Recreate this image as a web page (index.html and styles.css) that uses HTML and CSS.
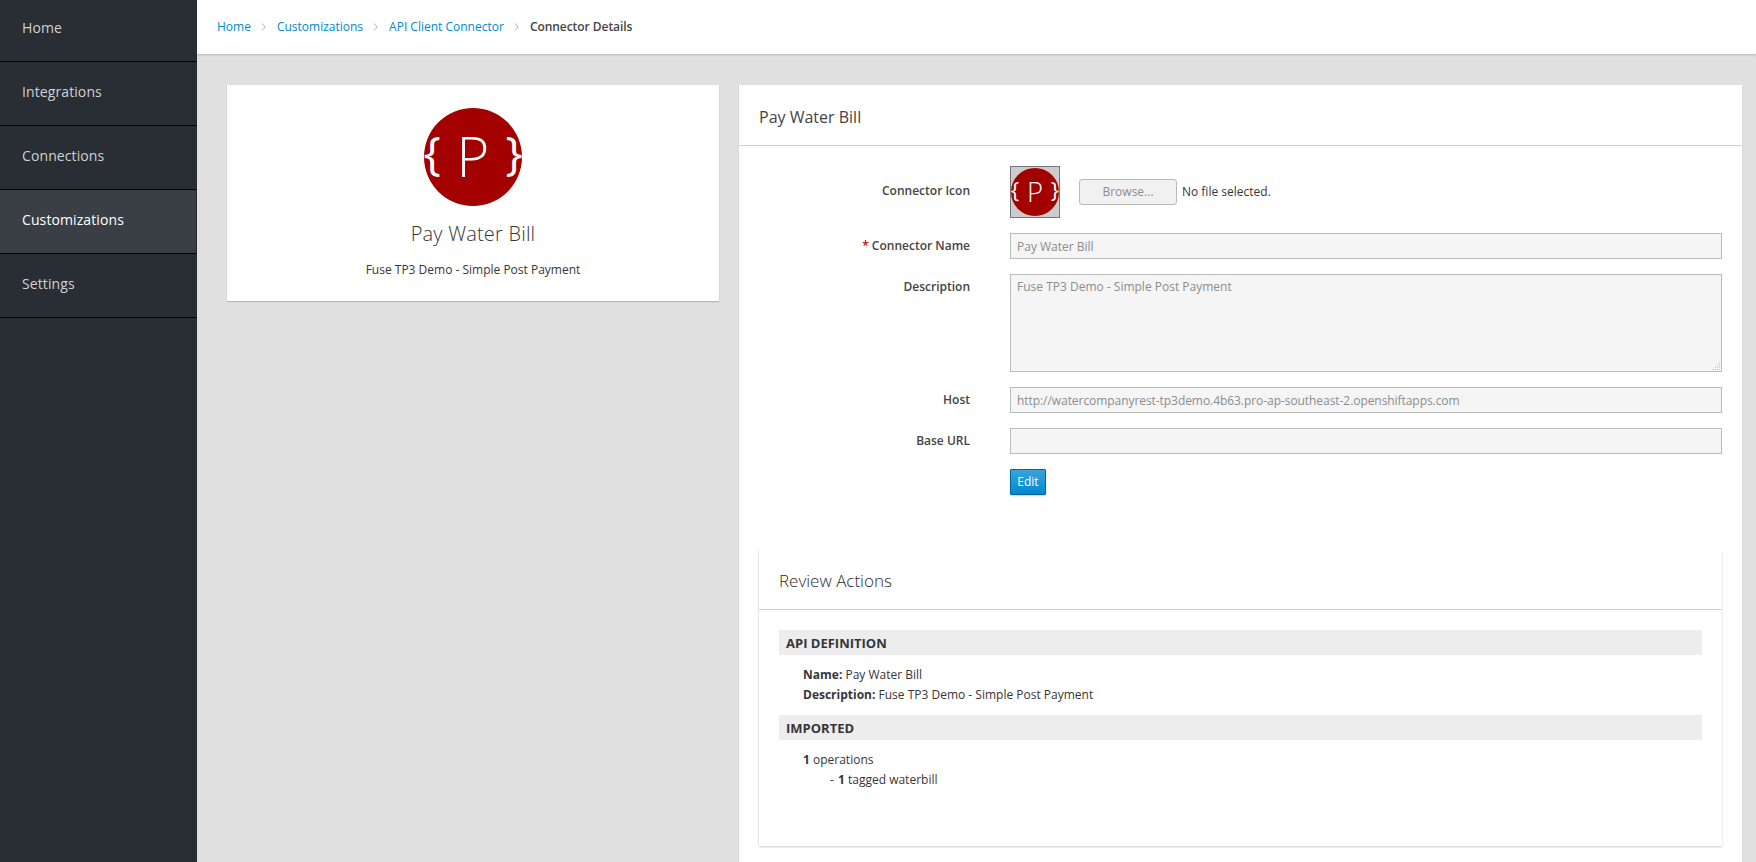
FILE: index.html
```html
<!DOCTYPE html>
<html lang="en">
<head>
    <meta charset="UTF-8">
    <title>Connector Details</title>
    <link rel="stylesheet" href="styles.css">
</head>
<body>
    <nav class="sidebar">
        <a class="nav-item nav-first">Home</a>
        <a class="nav-item">Integrations</a>
        <a class="nav-item">Connections</a>
        <a class="nav-item active">Customizations</a>
        <a class="nav-item">Settings</a>
    </nav>

    <div class="main">
        <div class="topbar">
            <a class="crumb">Home</a>
            <svg class="crumb-sep" viewBox="0 0 5 8"><polyline points="1,0.5 4,4 1,7.5"/></svg>
            <a class="crumb">Customizations</a>
            <svg class="crumb-sep" viewBox="0 0 5 8"><polyline points="1,0.5 4,4 1,7.5"/></svg>
            <a class="crumb">API Client Connector</a>
            <svg class="crumb-sep" viewBox="0 0 5 8"><polyline points="1,0.5 4,4 1,7.5"/></svg>
            <span class="crumb-current">Connector Details</span>
        </div>

        <div class="content">
            <div class="card summary-card">
                <svg class="logo logo-large" viewBox="0 0 98 98">
                    <circle cx="49" cy="49" r="49"/>
                    <text class="brace" x="8" y="62" text-anchor="middle">{</text>
                    <text x="49" y="69" text-anchor="middle">P</text>
                    <text class="brace" x="90" y="62" text-anchor="middle">}</text>
                </svg>
                <h2 class="summary-name">Pay Water Bill</h2>
                <p class="summary-desc">Fuse TP3 Demo - Simple Post Payment</p>
            </div>

            <div class="card detail-card">
                <div class="card-title">Pay Water Bill</div>
                <form class="detail-form">
                    <label class="form-label label-icon">Connector Icon</label>
                    <div class="icon-row">
                        <div class="icon-box">
                            <svg class="logo logo-small" viewBox="0 0 98 98">
                                <circle cx="49" cy="49" r="49"/>
                                <text class="brace" x="8" y="62" text-anchor="middle">{</text>
                                <text x="49" y="69" text-anchor="middle">P</text>
                                <text class="brace" x="90" y="62" text-anchor="middle">}</text>
                            </svg>
                        </div>
                        <button type="button" class="btn-browse" disabled>Browse...</button>
                        <span class="file-name">No file selected.</span>
                    </div>

                    <label class="form-label"><span class="required">*</span> Connector Name</label>
                    <input class="field" type="text" value="Pay Water Bill" disabled>

                    <label class="form-label">Description</label>
                    <div class="area-wrap">
                        <textarea class="field field-area" disabled>Fuse TP3 Demo - Simple Post Payment</textarea>
                        <svg class="grip" viewBox="0 0 9 9">
                            <rect x="7" y="1" width="1" height="1"/>
                            <rect x="5" y="3" width="1" height="1"/>
                            <rect x="7" y="3" width="1" height="1"/>
                            <rect x="3" y="5" width="1" height="1"/>
                            <rect x="5" y="5" width="1" height="1"/>
                            <rect x="7" y="5" width="1" height="1"/>
                            <rect x="1" y="7" width="1" height="1"/>
                            <rect x="3" y="7" width="1" height="1"/>
                            <rect x="5" y="7" width="1" height="1"/>
                            <rect x="7" y="7" width="1" height="1"/>
                        </svg>
                    </div>

                    <label class="form-label">Host</label>
                    <input class="field field-host" type="text" value="http://watercompanyrest-tp3demo.4b63.pro-ap-southeast-2.openshiftapps.com" disabled>

                    <label class="form-label">Base URL</label>
                    <input class="field" type="text" disabled>

                    <div class="form-actions">
                        <button type="button" class="btn-edit">Edit</button>
                    </div>
                </form>

                <div class="review">
                    <div class="review-title">Review Actions</div>
                    <div class="review-body">
                        <div class="review-bar">API DEFINITION</div>
                        <div class="review-rows">
                            <div><b>Name:</b> Pay Water Bill</div>
                            <div><b>Description:</b> Fuse TP3 Demo - Simple Post Payment</div>
                        </div>
                        <div class="review-bar">IMPORTED</div>
                        <div class="review-rows">
                            <div><b>1</b> operations</div>
                            <div class="review-tag">- <b>1</b> tagged waterbill</div>
                        </div>
                    </div>
                </div>
            </div>
        </div>
    </div>
</body>
</html>
```

FILE: styles.css
```css
html, body {
    height: 100%;
}
body {
    margin: 0;
    display: flex;
    overflow: hidden;
    font-family: "Open Sans", sans-serif;
    font-size: 12px;
    line-height: 20px;
    color: #363636;
    background-color: #e0e0e0;
}

/* sidebar */
.sidebar {
    width: 197px;
    flex: none;
    background-color: #292e34;
}
.nav-item {
    display: flex;
    align-items: center;
    box-sizing: border-box;
    height: 64px;
    padding: 0 0 4px 22px;
    font-size: 14px;
    letter-spacing: 0.1px;
    color: #d1d1d1;
    border-bottom: 1px solid #050505;
    border-right: 1px solid #292e34;
}
.nav-first {
    height: 62px;
    padding-bottom: 6px;
}
.nav-item.active {
    color: #fff;
    background-color: #393f44;
    border-right-color: #22262a;
}

/* breadcrumb */
.main {
    flex: 1;
    min-width: 0;
}
.topbar {
    display: flex;
    align-items: center;
    box-sizing: border-box;
    height: 54px;
    padding: 0 0 1px 20px;
    background-color: #fff;
    box-shadow: 0 1px 2px rgba(0, 0, 0, 0.2);
}
.crumb {
    color: #0088ce;
}
.crumb-sep {
    width: 5px;
    height: 8px;
    margin: 0 11px 0 10px;
    fill: none;
    stroke: #9c9c9c;
    stroke-width: 0.8;
}
.crumb-current {
    font-weight: 600;
    color: #444;
    letter-spacing: -0.05px;
}

/* cards */
.content {
    display: flex;
    gap: 20px;
    padding: 31px 14px 0 30px;
    align-items: flex-start;
}
.card {
    background-color: #fff;
    box-shadow: 0 1px 1px rgba(0, 0, 0, 0.175);
}
.summary-card {
    width: 492px;
    flex: none;
    box-sizing: border-box;
    height: 216px;
    padding-top: 23px;
    text-align: center;
}
.logo {
    display: block;
}
.logo circle {
    fill: #a30000;
}
.logo text {
    fill: #fff;
    font-family: "Open Sans", sans-serif;
    font-weight: 300;
    font-size: 56px;
}
.logo .brace {
    font-size: 46px;
    font-weight: 400;
}
.logo-large {
    width: 98px;
    height: 98px;
    margin: 0 auto;
}
.summary-name {
    margin: 14px 0 0;
    font-size: 20px;
    font-weight: 300;
    line-height: 28px;
    letter-spacing: 0.2px;
}
.summary-desc {
    margin: 12px 0 0;
}
.detail-card {
    flex: 1;
    min-width: 0;
    padding-bottom: 40px;
}
.card-title {
    box-sizing: border-box;
    height: 61px;
    padding: 21px 20px 0;
    font-size: 16px;
    line-height: 22px;
    color: #444;
    border-bottom: 1px solid #d1d1d1;
}

/* form */
.detail-form {
    display: grid;
    grid-template-columns: 231px 1fr;
    column-gap: 40px;
    row-gap: 15px;
    padding: 20px 20px 0 0;
}
.form-label {
    padding-top: 3px;
    text-align: right;
    font-weight: 600;
    color: #444;
}
.label-icon {
    padding-top: 15px;
}
.required {
    color: #c00;
}
.icon-row {
    display: flex;
    align-items: center;
}
.icon-box {
    box-sizing: border-box;
    width: 50px;
    height: 52px;
    padding: 1px 0;
    display: flex;
    align-items: center;
    background-color: #ccc;
    border: 1px solid #777;
}
.logo-small {
    width: 48px;
    height: 48px;
}
.btn-browse {
    box-sizing: border-box;
    width: 98px;
    height: 26px;
    margin-left: 19px;
    padding: 0;
    font: inherit;
    color: #8b8d8f;
    background-color: #f1f1f1;
    border: 1px solid #bbb;
    border-radius: 3px;
}
.file-name {
    margin-left: 5px;
}
.field {
    box-sizing: border-box;
    display: block;
    width: 100%;
    height: 26px;
    margin: 0;
    padding: 2px 6px;
    font: inherit;
    color: #8b8d8f;
    background-color: #f5f5f5;
    border: 1px solid #bbb;
    border-radius: 0;
}
.field-host {
    letter-spacing: -0.06px;
}
.area-wrap {
    position: relative;
}
.field-area {
    height: 98px;
    resize: none;
}
.grip {
    position: absolute;
    right: 1px;
    bottom: 1px;
    width: 9px;
    height: 9px;
    fill: #c4c4c4;
}
.form-actions {
    grid-column: 2;
}
.btn-edit {
    box-sizing: border-box;
    display: block;
    width: 36px;
    height: 26px;
    padding: 0;
    font: inherit;
    color: #fff;
    background-image: linear-gradient(to bottom, #39a5dc, #0088ce);
    border: 1px solid #00659c;
    border-radius: 1px;
    box-shadow: 0 1px 2px rgba(0, 0, 0, 0.2);
}

/* review */
.review {
    margin: 55px 20px 0;
    height: 296px;
    box-sizing: border-box;
    box-shadow: 0 1px 2px rgba(0, 0, 0, 0.2), -1px 0 1px rgba(0, 0, 0, 0.03);
}
.review-title {
    box-sizing: border-box;
    height: 60px;
    padding: 20px 20px 0;
    font-size: 17px;
    font-weight: 300;
    line-height: 22px;
    color: #2b2b2b;
    border-bottom: 1px solid #d1d1d1;
}
.review-body {
    padding: 20px;
}
.review-bar {
    height: 25px;
    padding-left: 7px;
    font-size: 13px;
    font-weight: 700;
    line-height: 26px;
    background-color: #ededed;
}
.review-rows {
    padding: 10px 24px;
}
.review-rows b {
    font-weight: 700;
}
.review-tag {
    padding-left: 27px;
}
.review-tag b {
    margin-left: 1px;
}
```
